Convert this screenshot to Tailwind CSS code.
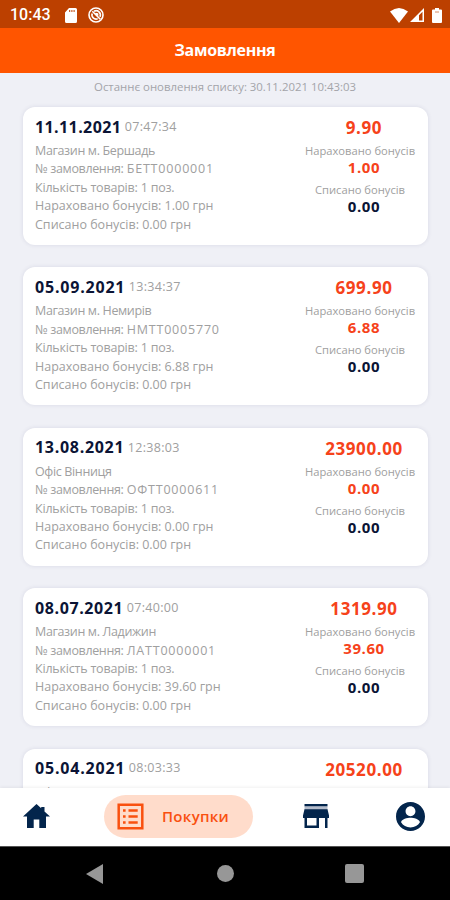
<!DOCTYPE html>
<html lang="uk">
    <head>
        <meta charset="UTF-8" />
        <meta name="viewport" content="width=device-width, initial-scale=1.0" />

        <title>Замовлення</title>

        <!-- Scripts -->
        <script src="https://cdn.jsdelivr.net/npm/@tailwindcss/browser@4"></script>
    </head>

    <body class="flex h-[900px] w-[450px] flex-col overflow-hidden bg-[#eff0f6] font-['Open_Sans',sans-serif]">
        <!-- Status bar -->
        <div class="flex h-7 shrink-0 items-center bg-[#bc4000] pr-2 pl-2.5 pt-0.5 text-white">
            <span class="w-[41px] font-['Roboto',sans-serif] text-base font-medium whitespace-nowrap">10:43</span>
            <svg class="ml-[14px] h-[15px] w-3" viewBox="0 0 12 15" fill="currentColor">
                <path fill-rule="evenodd" d="M4 0h6.5Q12 0 12 1.5v12q0 1.5-1.5 1.5h-9Q0 15 0 13.500V4.500zM4.200 2v2h1V2zM6.400 2v2h1V2zM8.600 2v2h1V2z" />
            </svg>
            <svg class="ml-[11px] size-4" viewBox="0 0 16 16" fill="none" stroke="currentColor">
                <circle cx="8" cy="8" r="7" stroke-width="1.600" />
                <path stroke-width="1.600" d="M4.300 4.300l8 8M6 4.300a4.200 4.200 0 0 1 5.900 5.500M4.200 6.500a4.200 4.200 0 0 0 5.500 5.300M7.500 6.500l2 .4.300 1.800" />
            </svg>
            <svg class="ml-auto h-[15px] w-[18px]" viewBox="0 0 18 15" fill="currentColor">
                <path d="M0 3.500Q9-3.500 18 3.500L9 15z" />
            </svg>
            <svg class="ml-0.5 size-[14px]" viewBox="0 0 14 14" fill="currentColor">
                <path fill-rule="evenodd" d="M14 0v14H0zM12.500 3.800L9 7.300v5.200h3.500z" />
            </svg>
            <svg class="ml-[8px] h-[15px] w-[10px]" viewBox="0 0 10 15" fill="currentColor">
                <path d="M3 0h4v1.500h2q1 0 1 1V14q0 1-1 1H1q-1 0-1-1V2.500q0-1 1-1h2z" />
                <path d="M3 4h4" stroke="#bc4000" stroke-opacity=".6" />
            </svg>
        </div>

        <!-- Header -->
        <header class="flex h-[45px] shrink-0 items-center justify-center bg-[#ff5500] pb-0.5 text-white">
            <h1 class="text-base font-bold tracking-[-0.3px]">Замовлення</h1>
        </header>

        <!-- Orders -->
        <main class="min-h-0 flex-1 overflow-hidden px-[23px]">
            <p class="flex h-[34px] items-center justify-center pb-[6px] text-[11.4px] whitespace-nowrap text-[#a3a4a9]">Останнє оновлення списку: 30.11.2021 10:43:03</p>
            <div id="orders" class="flex w-[405px] flex-col gap-[22.4px]"></div>
        </main>

        <!-- Tabs -->
        <nav class="relative flex h-[58px] shrink-0 items-center bg-white pb-0.5 shadow-[0_-1px_3px_rgba(0,0,0,0.06)]">
            <svg class="ml-[22.500px] h-6 w-[27px]" viewBox="0 0 27 24" fill="#03254c">
                <path d="M13.500 0L0 12.500h4V24h6.700v-8.500h5.600V24H23V12.500h4L21.500 7.400V3h-3.300v1.300z" />
            </svg>
            <div class="ml-[54.500px] flex h-[43px] w-[149px] items-center rounded-full bg-[#ffdccb] text-[#f9500f]">
                <svg class="ml-[13px] size-[27px]" viewBox="0 0 27 27" fill="none" stroke="currentColor">
                    <path stroke-width="2.500" d="M1.700 1.700h23.600v23.600H1.700z" />
                    <path stroke-width="2.400" d="M6 7.500h2.600M6 13.500h2.600M6 19.500h2.600M11.500 7.500h9.200M11.500 13.500h9.200M11.500 19.500h9.200" />
                </svg>
                <span class="ml-[18px] text-[15px] leading-5 font-semibold tracking-[0.3px]">Покупки</span>
            </div>
            <svg class="ml-[50px] h-6 w-[26px]" viewBox="0 0 26 24" fill="#03254c">
                <path fill="#b4bccb" d="M1.500 2h23v4h-23z" />
                <path d="M1.500 0h23v2.200h-23z" />
                <path fill-rule="evenodd" d="M1.500 5.200h23L26 11.500V14h-1.500V24H22v-10h-6V24H1.500v-10H0V11.500zM4 14v7.500h9.500V14z" />
            </svg>
            <svg class="ml-[67px] size-[29px]" viewBox="2 2 20 20" fill="#03254c">
                <path fill-rule="evenodd" d="M12 2C6.480 2 2 6.480 2 12s4.480 10 10 10 10-4.480 10-10S17.520 2 12 2zm0 3c1.900 0 3.400 1.500 3.400 3.400s-1.500 3.400-3.400 3.400-3.400-1.500-3.400-3.400S10.100 5 12 5zm0 14.500c-2.800 0-5.200-1.400-6.500-3.600.3-2 4.300-3 6.500-3s6.200 1 6.500 3c-1.300 2.200-3.700 3.600-6.500 3.600z" />
            </svg>
        </nav>

        <!-- Android navigation -->
        <div class="flex h-[54px] shrink-0 items-center border-t border-[#555] bg-black pr-[86px] pl-[86px] text-[#979797]">
            <svg class="h-5 w-[17px]" viewBox="0 0 17 20" fill="currentColor"><path d="M17 0v20L0 10z" /></svg>
            <div class="ml-[114px] size-[17px] rounded-full bg-[#979797]"></div>
            <div class="ml-auto size-[19px] rounded-[2px] bg-[#979797]"></div>
        </div>

        <script>
            const orders = [
                { date: "11.11.2021", time: "07:47:34", shop: "Магазин м. Бершадь", number: "БЕТТ0000001", bonus: "1.00", total: "9.90", tracking: "tracking-[0.4px]" },
                { date: "05.09.2021", time: "13:34:37", shop: "Магазин м. Немирів", number: "НМТТ0005770", bonus: "6.88", total: "699.90", tracking: "tracking-[0.8px]" },
                { date: "13.08.2021", time: "12:38:03", shop: "Офіс Вінниця", number: "ОФТТ0000611", bonus: "0.00", total: "23900.00", tracking: "tracking-[0.7px]" },
                { date: "08.07.2021", time: "07:40:00", shop: "Магазин м. Ладижин", number: "ЛАТТ0000001", bonus: "39.60", total: "1319.90", tracking: "tracking-[0.6px]" },
                { date: "05.04.2021", time: "08:03:33", shop: "Офіс Вінниця", number: "ОФТТ0000204", bonus: "0.00", total: "20520.00", tracking: "tracking-[0.8px]" },
            ];

            document.getElementById("orders").innerHTML = orders
                .map(
                    (order) => `
                <article class="flex h-[138px] shrink-0 justify-between rounded-xl bg-white pt-2 pr-1 pl-3 shadow-[0_0_4px_rgba(60,60,110,0.12)]">
                    <div class="text-[12.5px] leading-[18.4px] whitespace-nowrap text-[#a0a0a0]">
                        <div class="mb-[4px] flex h-[23px] items-center gap-[3.5px]">
                            <span class="text-base font-bold ${order.tracking} text-[#0b1435]">${order.date}</span>
                            <span class="pt-px text-[12.5px] tracking-[0.3px]">${order.time}</span>
                        </div>
                        <p class="tracking-[-0.35px]">${order.shop}</p>
                        <p><span class="tracking-[-0.35px]">№ замовлення:</span> <span class="tracking-[0.8px]">${order.number}</span></p>
                        <p class="tracking-[-0.2px]">Кількість товарів: 1 поз.</p>
                        <p>Нараховано бонусів: ${order.bonus} грн</p>
                        <p>Списано бонусів: 0.00 грн</p>
                    </div>
                    <div class="flex w-[128px] flex-col items-center text-[11.2px] whitespace-nowrap text-[#a0a0a0]">
                        <span class="h-[28px] pt-px pl-2 text-[17px] leading-6 font-bold tracking-[0.6px] text-[#f6421a]">${order.total}</span>
                        <span class="h-4 leading-4">Нараховано бонусів</span>
                        <span class="h-[23px] pl-2 text-[15px] leading-4 font-bold tracking-[0.6px] text-[#f6421a]">${order.bonus}</span>
                        <span class="h-4 leading-4">Списано бонусів</span>
                        <span class="pl-2 text-[15px] leading-4 font-bold tracking-[0.6px] text-[#0b1435]">0.00</span>
                    </div>
                </article>`
                )
                .join("");
        </script>
    </body>
</html>
